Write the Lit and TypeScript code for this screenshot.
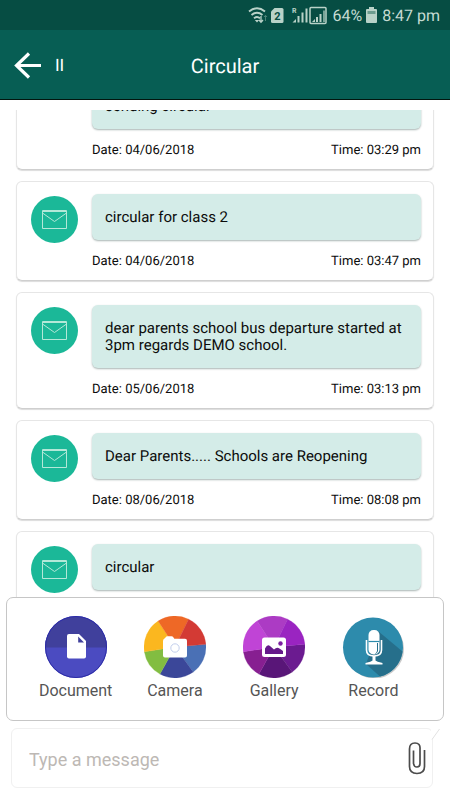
import { LitElement, html, css, svg } from "lit";
import { customElement, property, query } from "lit/decorators.js";

interface Circular {
  text: string;
  date: string;
  time: string;
}

const CIRCULARS: Circular[] = [
  { text: "\n\nsending circular", date: "04/06/2018", time: "03:29 pm" },
  { text: "circular for class 2", date: "04/06/2018", time: "03:47 pm" },
  {
    text: "dear parents school bus departure started at 3pm regards DEMO school.",
    date: "05/06/2018",
    time: "03:13 pm",
  },
  { text: "Dear Parents..... Schools are Reopening", date: "08/06/2018", time: "08:08 pm" },
  { text: "circular", date: "08/06/2018", time: "08:10 pm" },
];

/** Path of a pie slice of the 62px discs, angles in degrees clockwise from east. */
const slice = (from: number, to: number): string => {
  const at = (deg: number) => {
    const a = (deg * Math.PI) / 180;
    return `${(31 + 31 * Math.cos(a)).toFixed(2)} ${(31 + 31 * Math.sin(a)).toFixed(2)}`;
  };
  return `M31 31L${at(from)}A31 31 0 0 1 ${at(to)}Z`;
};

const wheel = (colors: string[]) => {
  const stops = [-5, 54, 119, 171, 237, 296, 355];
  return colors.map((c, i) => svg`<path d=${slice(stops[i], stops[i + 1])} fill=${c} stroke=${c} stroke-width="0.3"/>`);
};

const documentIcon = html`<svg class="disc" viewBox="0 0 62 62" aria-hidden="true">
  <circle cx="31" cy="31" r="31" fill="#4b4bc1" />
  <path d="M0 31.500A31 31 0 0 1 62 31.500Z" fill="#40409c" />
  <circle cx="31" cy="31" r="30.500" fill="none" stroke="#2c2ca6" stroke-width="1" />
  <path d="M24 18H34l7 7v15.500a2 2 0 0 1-2 2H24a2 2 0 0 1-2-2V20a2 2 0 0 1 2-2Z" fill="#fff" />
  <path d="M33.200 20.500v6H39Z" fill="#40409c" />
</svg>`;

const cameraIcon = html`<svg class="disc" viewBox="0 0 62 62" aria-hidden="true">
  ${wheel(["#4a70b5", "#3b4799", "#82bd41", "#fbb71f", "#ee6826", "#d33a34"])}
  <path d="M20.500 22.500l1-1q.8-1.200 2-1.200h4q1.200 0 2 1.200l.8 1.200H41q2 0 2 2V39.500q0 2-2 2H21q-2 0-2-2V25q0-2 1.500-2.500Z" fill="#fff" />
  <circle cx="31" cy="32" r="4.200" fill="none" stroke="#c3cfec" stroke-width="1" />
</svg>`;

const galleryIcon = html`<svg class="disc" viewBox="0 0 62 62" aria-hidden="true">
  ${wheel(["#6b1b90", "#591678", "#871f91", "#c044d6", "#ac3bc4", "#9a24c1"])}
  <rect x="19" y="21.500" width="24" height="19.500" rx="2.500" fill="#fff" />
  <path d="M22 38V32.500q2.500-5 5-2.500l4 3.500q2.500-2.500 4.500-1.500T40 35v3Z" fill="#65198a" />
  <circle cx="37.500" cy="27.500" r="2.200" fill="#7b1fa0" />
</svg>`;

const recordIcon = html`<svg class="disc" viewBox="0 0 62 62" aria-hidden="true">
  <circle cx="32.500" cy="33" r="29.500" fill="#c9c9c9" />
  <circle cx="31" cy="31.500" r="30" fill="#2d8bac" />
  <path d="M36 15L60.500 35.500A30 30 0 0 1 38 60.500L24 48Z" fill="#266f8b" />
  <rect x="26.500" y="14" width="11" height="24.500" rx="5" fill="#fff" />
  <path d="M26.500 25.500h11" stroke="#2d8bac" stroke-width="1.200" />
  <path d="M35.500 27v8q-.5 2-2 2.500" stroke="#266f8b" stroke-width="1" fill="none" />
  <path d="M24.500 24v10q0 6 7.500 6t7.500-6V24" fill="none" stroke="#fff" stroke-width="1.600" />
  <path d="M30.500 40h3v4.500q1 1 7 2.500v1.500h-17V47q6-1.500 7-2.500Z" fill="#fff" />
</svg>`;

@customElement("status-bar")
export class StatusBar extends LitElement {
  static styles = css`
    :host {
      display: flex;
      align-items: center;
      justify-content: flex-end;
      height: 30px;
      padding: 0 10px 0 0;
      background: #064d43;
      color: #c5dbd2;
      font-size: 16px;
    }
    .signals {
      width: 82px;
      height: 22px;
      margin-right: 2px;
    }
    .battery {
      width: 11px;
      height: 16px;
      margin: 0 5px 0 4px;
    }
  `;

  render() {
    return html`
      <svg class="signals" viewBox="0 0 82 22" fill="none" aria-label="Wi-Fi and mobile signal">
        <g stroke="#b9d2c8" stroke-width="1.900">
          <path d="M1 7.500q8-6.500 16 0" />
          <path d="M3.500 11q5.500-4.500 11 0" />
          <path d="M6 14.300q3-2.500 6 0" />
        </g>
        <path d="M9 18.500l-2.200-2.500h4.400Z" fill="#b9d2c8" />
        <path d="M13 12v6M11 16l2 2.300 2-2.300" stroke="#b9d2c8" stroke-width="1.300" />
        <path d="M17.500 17v-5.500M16 13l1.500-1.700L19 13" stroke="#4d8578" />
        <path d="M26.500 4H34q1.500 0 1.500 1.500v12q0 1.500-1.500 1.500H24.500q-1.500 0-1.500-1.500V7.500Z" fill="#b9d2c8" />
        <text x="29.500" y="15.500" text-anchor="middle" font-size="11" font-weight="700" fill="#064d43">2</text>
        <text x="44" y="9" font-size="7" font-weight="700" fill="#b9d2c8">R</text>
        <path d="M44.500 18.500l3.500-3.500v3.500Z" fill="#b9d2c8" />
        <path d="M50.500 18.500V12M54.500 18.500V8.500M58.500 18.500V4.500" stroke="#b9d2c8" stroke-width="2" />
        <rect x="62" y="3.500" width="16" height="16" rx="1" stroke="#b9d2c8" stroke-width="1.500" />
        <path d="M64 18l3-3v3Z" fill="#b9d2c8" />
        <path d="M69 18v-5M72.500 18v-8" stroke="#b9d2c8" stroke-width="2" />
        <path d="M76 18V6.500" stroke="#7aa498" stroke-width="2" />
      </svg>
      <span>64%</span>
      <svg class="battery" viewBox="0 0 11 16" aria-label="Battery">
        <path d="M3 0h5v2h2q1 0 1 1v12q0 1-1 1H1q-1 0-1-1V3q0-1 1-1h2Z" fill="#b9d2c8" />
        <path d="M1.500 4h8v3h-8Z" fill="#6d9c8f" />
      </svg>
      <span>8:47 pm</span>
    `;
  }
}

@customElement("circular-card")
export class CircularCard extends LitElement {
  @property({ attribute: false }) item!: Circular;

  static styles = css`
    :host {
      display: flex;
      gap: 14px;
      flex: none;
      box-sizing: border-box;
      padding: 12px 12px 11px 14px;
      border: 1px solid #e6e6e6;
      border-bottom-color: #cfcfcf;
      border-radius: 6px;
      background: #fff;
      box-shadow: 0 1px 1px #dcdcdc;
      color: #0c0c0c;
    }
    .badge {
      flex: none;
      width: 47px;
      height: 47px;
      margin-top: 2px;
    }
    .content {
      flex: 1;
      min-width: 0;
    }
    .bubble {
      margin: 0;
      padding: 15px 13px 14px;
      border-radius: 6px;
      background: #d4ece8;
      box-shadow: 0 1px 2px #a9b5b3;
      font-size: 15px;
      line-height: 17px;
      white-space: pre-line;
    }
    .meta {
      display: flex;
      justify-content: space-between;
      margin-top: 14px;
      font-size: 13px;
      line-height: 15px;
    }
  `;

  render() {
    return html`
      <svg class="badge" viewBox="0 0 47 47" aria-hidden="true">
        <circle cx="23.500" cy="23.500" r="23.500" fill="#1bb898" />
        <path d="M11.500 14.500H35.500V32.500H11.500Z M11.500 17L23.500 25.500L35.500 17M11.500 15.500H35.500" fill="none" stroke="#b4e8d8" stroke-width="1" />
      </svg>
      <div class="content">
        <p class="bubble">${this.item.text}</p>
        <div class="meta">
          <span>Date: ${this.item.date}</span>
          <span>Time: ${this.item.time}</span>
        </div>
      </div>
    `;
  }
}

@customElement("attach-panel")
export class AttachPanel extends LitElement {
  static styles = css`
    :host {
      display: flex;
      box-sizing: border-box;
      padding: 18px 20px 19px 19px;
      border: 1px solid #c6c6c6;
      border-radius: 7px;
      background: #fff;
    }
    .option {
      flex: 1;
      display: flex;
      flex-direction: column;
      align-items: center;
      gap: 3px;
      padding: 0;
      border: 0;
      background: none;
      color: #555;
      font: inherit;
      font-size: 16px;
      line-height: 20px;
    }
    .disc {
      width: 62px;
      height: 62px;
    }
  `;

  render() {
    return html`
      <button class="option" type="button">${documentIcon}<span>Document</span></button>
      <button class="option" type="button">${cameraIcon}<span>Camera</span></button>
      <button class="option" type="button">${galleryIcon}<span>Gallery</span></button>
      <button class="option" type="button">${recordIcon}<span>Record</span></button>
    `;
  }
}

@customElement("app-root")
export class AppRoot extends LitElement {
  @query(".list") private list!: HTMLElement;

  static styles = css`
    :host {
      display: flex;
      flex-direction: column;
      height: 100vh;
      background: #fff;
      font-family: Roboto, "Noto Sans", sans-serif;
      text-rendering: geometricPrecision;
    }
    .header {
      display: grid;
      grid-template-columns: 1fr auto 1fr;
      align-items: center;
      height: 70px;
      box-sizing: border-box;
      flex: none;
      padding: 2px 14px 0;
      border-bottom: 1px solid #02160f;
      background: #075e54;
      color: #fff;
    }
    .lead {
      display: flex;
      align-items: center;
      gap: 14px;
      font-size: 17px;
    }
    .back {
      display: flex;
      padding: 0;
      border: 0;
      background: none;
    }
    .arrow {
      width: 27px;
      height: 27px;
    }
    .title {
      margin: 0;
      font-size: 20px;
      font-weight: 400;
      line-height: 24px;
    }
    .main {
      position: relative;
      display: flex;
      flex: 1;
      min-height: 0;
      margin-top: 10px;
    }
    .list {
      display: flex;
      flex-direction: column;
      flex: 1;
      gap: 11px;
      padding: 0 16px 120px;
      overflow-y: auto;
      scrollbar-width: none;
    }
    .attach {
      position: absolute;
      left: 6px;
      right: 6px;
      bottom: 7px;
    }
    .composer {
      position: relative;
      display: flex;
      align-items: center;
      flex: none;
      box-sizing: border-box;
      height: 60px;
      margin: 0 17px 12px 11px;
      padding: 0 6px 0 17px;
      border: 1px solid #f0f0f0;
      border-radius: 6px;
      background: #fff;
    }
    .tail {
      position: absolute;
      top: -1px;
      right: -9px;
      width: 10px;
      height: 12px;
    }
    .field {
      flex: 1;
      min-width: 0;
      padding: 3px 0 0;
      border: 0;
      outline: 0;
      background: none;
      color: #333;
      font: inherit;
      font-size: 18px;
      line-height: 24px;
    }
    .field::placeholder {
      color: #bdb8b4;
      opacity: 1;
    }
    .clip {
      display: flex;
      padding: 0;
      border: 0;
      background: none;
    }
    .clip-icon {
      width: 18px;
      height: 33px;
    }
  `;

  async firstUpdated() {
    const cards = [...this.list.querySelectorAll("circular-card")] as CircularCard[];
    await Promise.all(cards.map((card) => card.updateComplete));
    this.list.scrollTop = 74;
  }

  render() {
    return html`
      <status-bar></status-bar>
      <header class="header">
        <div class="lead">
          <button class="back" type="button" aria-label="Back">
            <svg class="arrow" viewBox="0 0 27 27" fill="none" stroke="#fff" stroke-width="3.200">
              <path d="M27 13.500H3M15 1.500L2.500 13.500L15 25.500" />
            </svg>
          </button>
          <span>II</span>
        </div>
        <h1 class="title">Circular</h1>
      </header>
      <main class="main">
        <div class="list">
          ${CIRCULARS.map((item) => html`<circular-card .item=${item}></circular-card>`)}
        </div>
        <attach-panel class="attach"></attach-panel>
      </main>
      <form class="composer">
        <input class="field" type="text" aria-label="Message" placeholder="Type a message" />
        <button class="clip" type="button" aria-label="Attach">
          <svg class="clip-icon" viewBox="0 0 18 33" fill="none" stroke="#4c4c4c" stroke-width="1.700">
            <path d="M16.500 8V24.500Q16.500 31.500 9 31.500T1.500 24.500V7Q1.500 1 7 1T12 7V21.500Q12 25 9 25T5.500 21.500V8.500" />
          </svg>
        </button>
        <svg class="tail" viewBox="0 0 10 12" aria-hidden="true">
          <path d="M0 0H9L1 11V12H0Z" fill="#fff" />
          <path d="M8.500 1L1 11.500" stroke="#e2e2e2" stroke-width="1" />
        </svg>
      </form>
    `;
  }
}
